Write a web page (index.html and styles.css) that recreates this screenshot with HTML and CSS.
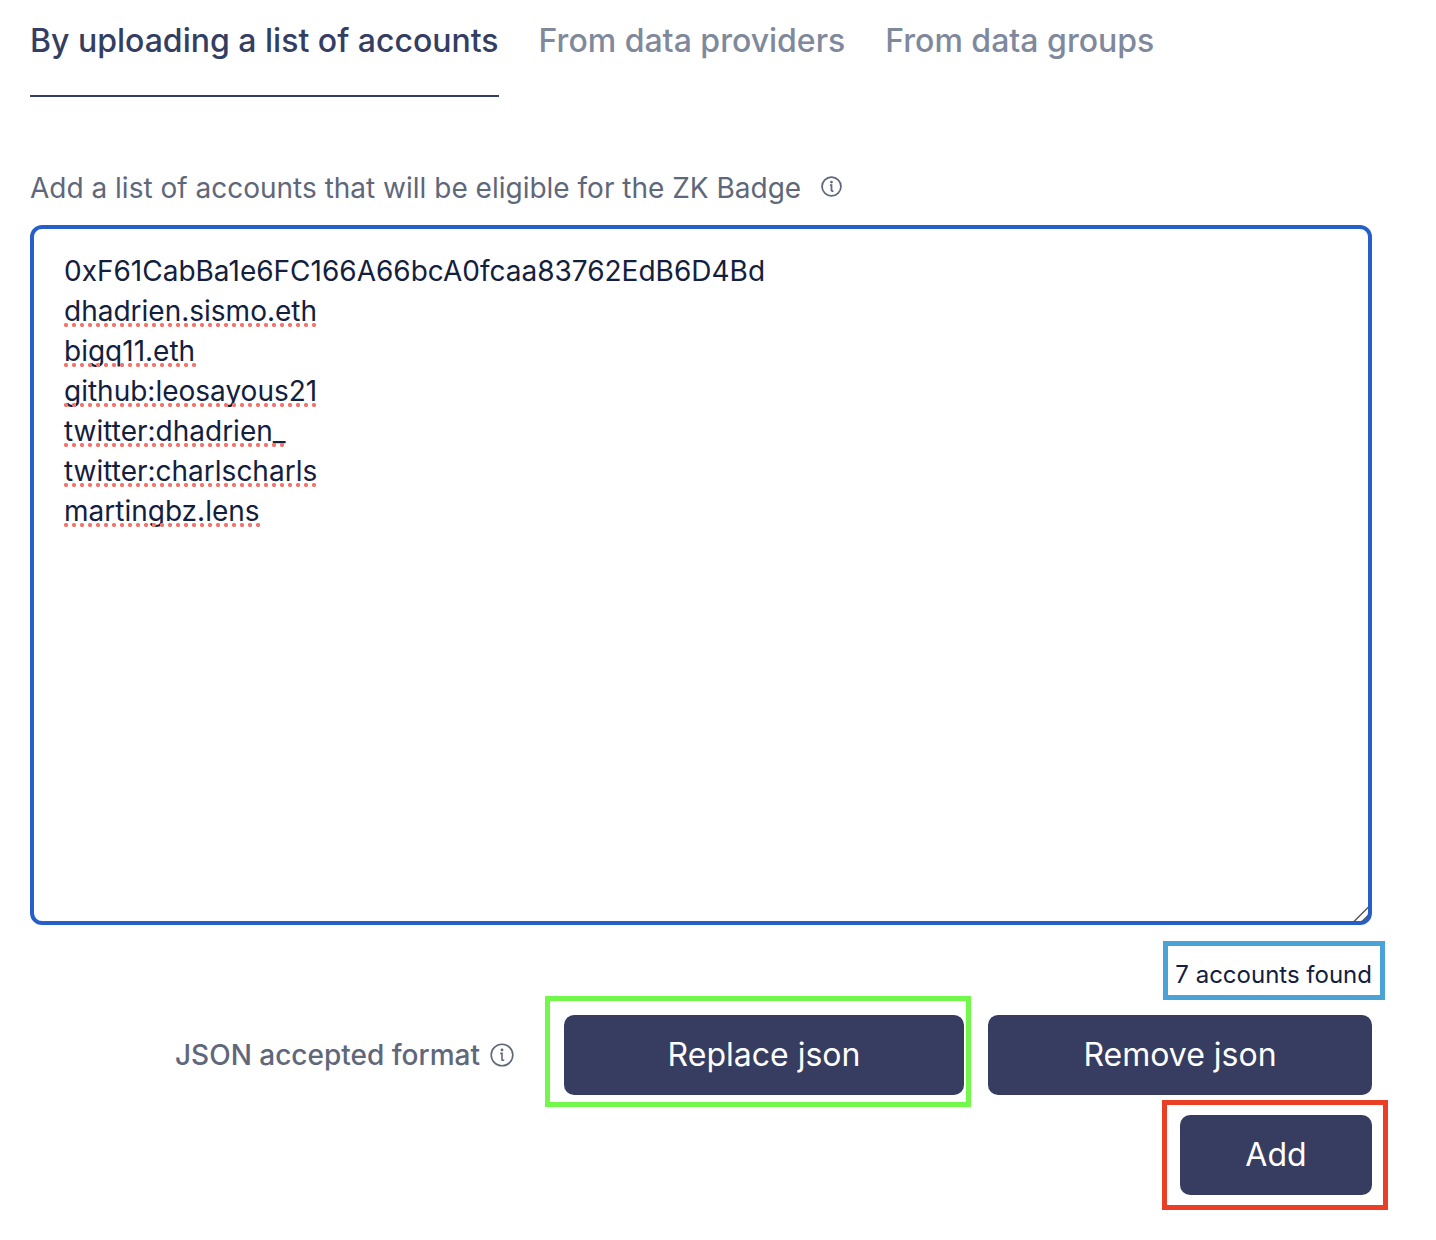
FILE: index.html
```html
<!DOCTYPE html>
<html lang="en">
<head>
<meta charset="utf-8">
<meta name="viewport" content="width=device-width, initial-scale=1">
<title>Eligible accounts</title>
<link rel="stylesheet" href="styles.css">
</head>
<body>
<main class="panel">
  <nav class="tabs" aria-label="Data source">
    <a class="tab tab-active" href="#upload" aria-current="page">By uploading a list of accounts</a>
    <a class="tab" href="#providers">From data providers</a>
    <a class="tab" href="#groups">From data groups</a>
  </nav>

  <div class="field-head">
    <label class="field-label" for="accounts">Add a list of accounts that will be eligible for the ZK Badge</label>
    <svg class="info info-small" viewBox="0 0 24 24" aria-hidden="true"><circle cx="12" cy="12" r="10.8"/><path d="M10.2 10.4h1.8v7M12 17.2h2.2"/><circle class="info-dot" cx="12" cy="6.9" r="1.6"/></svg>
  </div>

  <div class="editor">
    <textarea class="accounts" id="accounts" spellcheck="false">0xF61CabBa1e6FC166A66bcA0fcaa83762EdB6D4Bd
dhadrien.sismo.eth
bigq11.eth
github:leosayous21
twitter:dhadrien_
twitter:charlscharls
martingbz.lens</textarea>
    <div class="spelling" aria-hidden="true">
      <span class="mark" style="width:252px"></span>
      <span class="mark" style="width:132px"></span>
      <span class="mark" style="width:254px"></span>
      <span class="mark" style="width:224px"></span>
      <span class="mark" style="width:252px"></span>
      <span class="mark" style="width:196px"></span>
    </div>
    <svg class="grip" viewBox="0 0 16 16" aria-hidden="true"><path d="M1 15.5 15.5 1M9 15.5 15.5 9"/></svg>
  </div>

  <p class="count"><span class="framed frame-blue">7 accounts found</span></p>

  <div class="actions">
    <div class="format">
      <span>JSON accepted format</span>
      <svg class="info" viewBox="0 0 24 24" aria-hidden="true"><circle cx="12" cy="12" r="10.8"/><path d="M10.2 10.4h1.8v7M12 17.2h2.2"/><circle class="info-dot" cx="12" cy="6.9" r="1.4"/></svg>
    </div>
    <div class="framed frame-green"><button class="button button-replace" type="button">Replace json</button></div>
    <button class="button button-remove" type="button">Remove json</button>
  </div>
  <div class="actions">
    <div class="framed frame-red"><button class="button button-add" type="button">Add</button></div>
  </div>
</main>
</body>
</html>
```
FILE: styles.css
```css
* { box-sizing: border-box; }

body {
  margin: 0;
  background: #fff;
  color: #13203d;
  font-family: Inter, "Liberation Sans", sans-serif;
}

.panel { padding: 17px 64px 40px 30px; }

.tabs { display: flex; gap: 40px; }
.tab {
  padding-bottom: 30px;
  border-bottom: 2px solid transparent;
  color: #80899c;
  font-size: 32px;
  font-weight: 500;
  line-height: 48px;
  text-decoration: none;
  white-space: nowrap;
}
.tab-active { color: #343e63; border-color: #343e63; }

.field-head {
  display: flex;
  gap: 20px;
  margin-top: 71px;
  color: #5f677a;
}
.field-label { font-size: 28px; line-height: 40px; }

.info {
  width: 24px;
  height: 24px;
  flex: none;
  fill: none;
  stroke: #5f677a;
  stroke-width: 1.6;
}
.info-small { width: 21px; height: 21px; margin-top: 8px; stroke-width: 2; }
.info-dot { fill: #5f677a; stroke: none; }

.editor { position: relative; margin-top: 17px; }
.accounts {
  display: block;
  width: 100%;
  height: 700px;
  padding: 22px 30px;
  border: 4px solid #265fc9;
  border-radius: 12px;
  outline: none;
  background: #fff;
  color: #13203d;
  font: 28px/40px Inter, "Liberation Sans", sans-serif;
  resize: none;
}

/* Spell-check dots, one row for each line after the address */
.spelling {
  position: absolute;
  top: 98px;
  left: 34px;
  display: grid;
  gap: 36px;
  pointer-events: none;
}
.mark {
  height: 4px;
  background: radial-gradient(circle at 2px 2px, #f2766d 1.8px, transparent 2.4px) 0 0 / 8px 4px repeat-x;
}
.grip {
  position: absolute;
  right: 3px;
  bottom: 3px;
  width: 16px;
  height: 16px;
  fill: none;
  stroke: #555;
  stroke-width: 1.4;
  pointer-events: none;
}

.count {
  display: flex;
  justify-content: flex-end;
  margin: 34px 0 24px;
  font-size: 24px;
  line-height: 32px;
}

.actions {
  display: flex;
  justify-content: flex-end;
  gap: 24px;
  margin-bottom: 20px;
}
.format {
  display: flex;
  align-items: center;
  gap: 10px;
  margin-right: 26px;
  color: #5f677a;
  font-size: 28px;
  font-weight: 500;
}
.button {
  height: 80px;
  border: 0;
  border-radius: 10px;
  background: #363d61;
  color: #fff;
  font: 32px/48px Inter, "Liberation Sans", sans-serif;
}
.button-replace { width: 400px; }
.button-remove { width: 384px; }
.button-add { width: 192px; }

/* Annotation frames drawn around the highlighted items */
.framed { position: relative; }
.framed::after {
  content: "";
  position: absolute;
  border: 5px solid;
  pointer-events: none;
}
.frame-blue::after { inset: -18px -13px -9px -12px; border-color: #4aa3d6; }
.frame-green::after { inset: -19px -7px -12px -19px; border-color: #72f74b; }
.frame-red::after { inset: -15px -16px -15px -18px; border-color: #eb3f25; }
```
